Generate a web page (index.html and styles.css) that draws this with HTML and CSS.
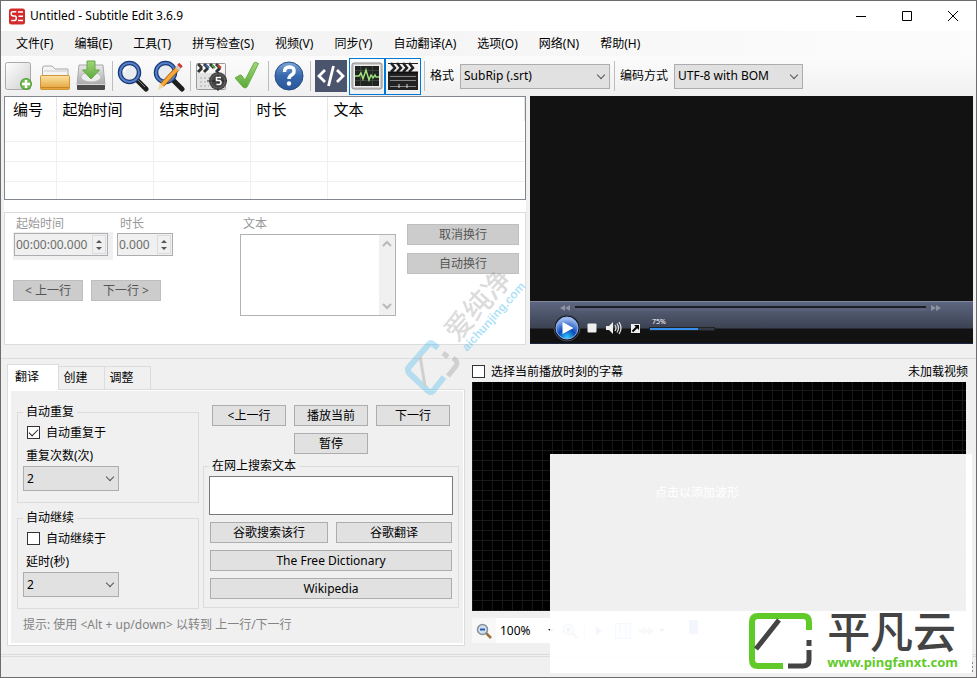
FILE: index.html
```html
<!DOCTYPE html>
<html lang="zh-CN">
<head>
<meta charset="utf-8">
<title>Untitled - Subtitle Edit 3.6.9</title>
<link rel="stylesheet" href="styles.css">
</head>
<body>
<div class="window">
  <header class="titlebar">
    <svg class="app-icon" width="16" height="17" viewBox="0 0 16 17"><rect width="16" height="16" y=".5" rx="2.5" fill="#d32a2c"/><path d="M7.3 3.8H3.8Q2.2 3.8 2.2 5.7T3.8 8h2q1.5 0 1.5 2.300t-1.500 2.300H2.200M14 4H9M14 8.200H9.500M14 12.600H9" fill="none" stroke="#fff" stroke-width="1.500"/></svg>
    <h1>Untitled - Subtitle Edit 3.6.9</h1>
    <div class="window-buttons">
      <button aria-label="最小化"><svg width="12" height="12"><path d="M1 6.500h10" stroke="#000"/></svg></button>
      <button aria-label="最大化"><svg width="12" height="12"><path d="M1.500 1.500h9v9h-9z" stroke="#000" fill="none"/></svg></button>
      <button aria-label="关闭"><svg width="12" height="12"><path d="M1 1l10 10M11 1L1 11" stroke="#000"/></svg></button>
    </div>
  </header>

  <nav class="menu">
    <button>文件(F)</button><button>编辑(E)</button><button>工具(T)</button><button>拼写检查(S)</button><button>视频(V)</button><button>同步(Y)</button><button>自动翻译(A)</button><button>选项(O)</button><button>网络(N)</button><button>帮助(H)</button>
  </nav>

  <div class="toolbar">
    <svg width="0" height="0" class="defs">
      <defs>
        <linearGradient id="page" x2="1" y2="1"><stop stop-color="#fff"/><stop offset="1" stop-color="#cfcfcf"/></linearGradient>
        <linearGradient id="green" x2="0" y2="1"><stop stop-color="#a3d77c"/><stop offset="1" stop-color="#5aa83a"/></linearGradient>
        <linearGradient id="folder" x2="0" y2="1"><stop stop-color="#fbe3a4"/><stop offset="1" stop-color="#e3a032"/></linearGradient>
        <linearGradient id="help" x2="0" y2="1"><stop stop-color="#7da7d8"/><stop offset=".5" stop-color="#3768ad"/><stop offset="1" stop-color="#2b5799"/></linearGradient>
        <linearGradient id="metal" x2="0" y2="1"><stop stop-color="#e9e9e9"/><stop offset="1" stop-color="#a8a8a8"/></linearGradient>
        <radialGradient id="play" cy=".95" r=".9"><stop stop-color="#35d0ff"/><stop offset=".45" stop-color="#0a49ba"/><stop offset="1" stop-color="#a9c4f5"/></radialGradient>
      </defs>
    </svg>
    <button aria-label="新建"><svg width="32" height="32"><rect x="2.500" y="2.500" width="25" height="27" rx="2" fill="url(#page)" stroke="#aaa"/><circle cx="23" cy="24" r="6" fill="#4d9d35"/><circle cx="23" cy="24" r="5" fill="#76bb57"/><path d="M23 20v8M19 24h8" stroke="#fff" stroke-width="2.500"/></svg></button>
    <button aria-label="打开"><svg width="32" height="32"><path d="M3.500 28V8q0-2 2-2H13l3 3h13v19z" fill="#f4f4f4" stroke="#a9a9a9"/><path d="M5 11h24" stroke="#ccc"/><rect x="1.500" y="15.500" width="29" height="14" rx="1" fill="url(#folder)" stroke="#d2943a"/><path d="M2 27.500h28" stroke="#c9852a"/></svg></button>
    <button aria-label="保存"><svg width="32" height="32"><path d="M4 5h24l2 20H2z" fill="url(#metal)" stroke="#aaa"/><ellipse cx="16" cy="17" rx="10" ry="5" fill="#ededed" stroke="#bbb"/><rect x="2" y="24" width="28" height="6" rx="1" fill="#4b4b4b"/><path d="M2 24.500h28" stroke="#d7d7d7"/><path d="M12 1h8v9h4.500L16 19 7.500 10H12z" fill="url(#green)" stroke="#65a844"/></svg></button>
    <i class="sep"></i>
    <button aria-label="查找"><svg width="32" height="32"><path d="M21 21l8 8" stroke="#1e1e1e" stroke-width="5" stroke-linecap="round"/><path d="M21 20l7 7" stroke="#888" stroke-width="1"/><circle cx="12.500" cy="12.500" r="9.500" fill="#e9edf0" stroke="#1b3a78" stroke-width="4.500"/><circle cx="12.500" cy="12.500" r="9.500" fill="none" stroke="#5582c8" stroke-width="2"/><path d="M7 12q1-5 6-5" stroke="#fff" stroke-width="2" fill="none"/></svg></button>
    <button aria-label="替换"><svg width="32" height="32"><path d="M21 21l8 8" stroke="#1e1e1e" stroke-width="5" stroke-linecap="round"/><circle cx="12.500" cy="12.500" r="9.500" fill="#e9edf0" stroke="#1b3a78" stroke-width="4.500"/><circle cx="12.500" cy="12.500" r="9.500" fill="none" stroke="#5582c8" stroke-width="2"/><path d="M25 8L9 25" stroke="#9c560d" stroke-width="5"/><path d="M25 8L9 25" stroke="#f6a938" stroke-width="3.500"/><path d="M7 23l4 4-6 3z" fill="#f0d6a0"/><path d="M24 9l3-3" stroke="#ccc" stroke-width="5"/><path d="M26 6.500l2-2" stroke="#d7352d" stroke-width="5"/></svg></button>
    <i class="sep"></i>
    <button aria-label="同步"><svg width="32" height="32"><rect x="1.500" y="3.500" width="29" height="26" rx="1" fill="#e3e3e3" stroke="#999"/><path d="M2 4h28v9H2z" fill="#f7f7f7"/><path d="M3 4l4 4M9 4l4 4M15 4l4 4M21 4l4 4" stroke="#3b3b3b" stroke-width="3"/><path d="M3 12l4-4M9 12l4-4M21 12l4-4" stroke="#333" stroke-width="3"/><path d="M11 5l3 3" stroke="#3b6bb0" stroke-width="2"/><path d="M17 5l3 3" stroke="#4ca03f" stroke-width="2"/><path d="M23 5l3 3" stroke="#cd4633" stroke-width="2"/><path d="M5 18h10M5 22h8M5 26h9" stroke="#aaa" stroke-dasharray="2 2"/><circle cx="23" cy="21" r="9" fill="#444"/><path d="M12 21h20M23 12v19" stroke="#222"/><circle cx="23" cy="21" r="7" fill="none" stroke="#666"/><path d="M26 17.500h-4.500v3h2.500q2 0 2 2t-2 2h-2.500" fill="none" stroke="#fff" stroke-width="1.500"/></svg></button>
    <button aria-label="拼写检查"><svg width="32" height="32"><path d="M4 18l5-3q1-.5 2 1l3 4L23 3q.5-1 1.500-.7l3 1.200Q22 15 16 27q-2 2-4 0z" fill="url(#green)" stroke="#69b042"/></svg></button>
    <i class="sep"></i>
    <button aria-label="帮助"><svg width="32" height="32"><circle cx="16" cy="16" r="14" fill="url(#help)" stroke="#274d86"/><path d="M11.500 12q0-5 5-5t4.500 4.500q0 2-2.500 3.500T16 19" fill="none" stroke="#fff" stroke-width="3.500"/><circle cx="16" cy="23.500" r="2.200" fill="#fff"/></svg></button>
    <i class="sep"></i>
    <button aria-label="源视图"><svg width="32" height="32"><path d="M0 0h32v32H0z" fill="#4a546c"/><path d="M10 10l-6 6 6 6M22 10l6 6-6 6M18.500 6l-5 20" fill="none" stroke="#fff" stroke-width="2.800"/></svg></button>
    <button class="on" aria-label="波形"><svg width="32" height="32"><rect x="1" y="3" width="30" height="26" rx="2" fill="#cfcfcf" stroke="#888"/><rect x="3.500" y="5.500" width="25" height="21" fill="#202522" stroke="#eee"/><path d="M4 10.500h24M4 20.500h24M9.500 6v20M21.500 6v20" stroke="#3c443e"/><path d="M4 16h4l2-3 2 6 3-9 3 10 2-5 2 3 2-3 1 2h3" fill="none" stroke="#9fe07c" stroke-width="1.500"/></svg></button>
    <button class="on" aria-label="视频"><svg width="32" height="32"><path d="M1 3h30v27H1z" fill="#222"/><path d="M1 4h30v8H1z" fill="#f3f3f3"/><path d="M4 3l4 5-4 4M10 3l4 5-4 4M16 3l4 5-4 4M22 3l4 5-4 4" fill="none" stroke="#222" stroke-width="2.500"/><path d="M1 12.500h30" stroke="#111" stroke-width="2"/><path d="M3 16.500h26M3 20.500h26M3 26.500h26" stroke="#888"/><path d="M12 24v4M20 24v4" stroke="#ddd"/></svg></button>
    <i class="sep"></i>
    <label for="format">格式</label>
    <span class="combo format"><select id="format"><option>SubRip (.srt)</option></select></span>
    <i class="sep slim"></i>
    <label for="encoding">编码方式</label>
    <span class="combo encoding"><select id="encoding"><option>UTF-8 with BOM</option></select></span>
  </div>

  <main class="upper">
    <section class="editor">
      <div class="list">
        <table>
          <colgroup><col class="c-num"><col class="c-time"><col class="c-time"><col class="c-dur"><col></colgroup>
          <thead><tr><th>编号</th><th>起始时间</th><th>结束时间</th><th>时长</th><th>文本</th></tr></thead>
          <tbody>
            <tr><td></td><td></td><td></td><td></td><td></td></tr>
            <tr><td></td><td></td><td></td><td></td><td></td></tr>
            <tr><td></td><td></td><td></td><td></td><td></td></tr>
            <tr><td></td><td></td><td></td><td></td><td></td></tr>
          </tbody>
        </table>
      </div>
      <div class="detail">
        <div class="times">
          <div class="time-row">
            <div><label for="start">起始时间</label><span class="spin-back"><span class="spin start"><input id="start" value="00:00:00.000" disabled><i class="arrows"></i></span></span></div>
            <div><label for="dur">时长</label><span class="spin dur"><input id="dur" value="0.000" disabled><i class="arrows"></i></span></div>
          </div>
          <div class="nav-row"><button class="btn" disabled>&lt; 上一行</button><button class="btn" disabled>下一行 &gt;</button></div>
        </div>
        <div class="text-col">
          <label for="text">文本</label>
          <div class="textbox"><textarea id="text" disabled></textarea>
            <div class="scroll"><svg width="10" height="8"><path d="M1 6l4-4 4 4" fill="none" stroke="#b9b9b9" stroke-width="2"/></svg><svg width="10" height="8"><path d="M1 2l4 4 4-4" fill="none" stroke="#b9b9b9" stroke-width="2"/></svg></div>
          </div>
        </div>
        <div class="wrap-col"><button class="btn" disabled>取消换行</button><button class="btn" disabled>自动换行</button></div>
      </div>
    </section>

    <section class="video">
      <div class="player">
        <div class="seek">
          <svg width="10" height="6"><path d="M5 0v6L0 3zM10 0v6L5 3z" fill="#8c92a0"/></svg>
          <i class="track"></i>
          <svg width="10" height="6"><path d="M0 0v6l5-3zM5 0v6l5-3z" fill="#8c92a0"/></svg>
        </div>
        <div class="controls">
          <button aria-label="播放"><svg width="28" height="28"><circle cx="14" cy="14" r="13" fill="#12141d" stroke="#444b5b"/><circle cx="14" cy="14" r="11" fill="url(#play)" stroke="#8bb2ee"/><path d="M9.500 8v12l11-6z" fill="#fff"/></svg></button>
          <button aria-label="停止"><svg width="10" height="10"><rect x=".5" y=".5" width="9" height="9" rx="1" fill="#eee"/></svg></button>
          <button aria-label="静音"><svg width="16" height="14"><path d="M0 5h3l4-4v12L3 9H0z" fill="#eee"/><path d="M9 4q2 3 0 6M11 2.500q3 4.500 0 9M13 1q4 6 0 12" fill="none" stroke="#ddd" stroke-width="1.300"/></svg></button>
          <button aria-label="全屏"><svg width="9" height="9"><path d="M0 0h9v9H0z" fill="#eee"/><path d="M1.500 7.500L6 3" stroke="#000" stroke-width="2"/><path d="M3 1h5v5z" fill="#000"/></svg></button>
          <div class="volume"><span>75%</span><i class="level"></i></div>
        </div>
      </div>
    </section>
  </main>

  <section class="lower">
    <div class="tabs">
      <div class="tab-row"><button class="active">翻译</button><button>创建</button><button>调整</button></div>
      <div class="tab-panel">
        <div class="tab-body">
          <div class="auto-col">
            <fieldset>
              <legend>自动重复</legend>
              <label class="check"><input type="checkbox" checked>自动重复于</label>
              <label class="line" for="repeat">重复次数(次)</label>
              <span class="combo short"><select id="repeat"><option>2</option></select></span>
            </fieldset>
            <fieldset>
              <legend>自动继续</legend>
              <label class="check"><input type="checkbox">自动继续于</label>
              <label class="line" for="delay">延时(秒)</label>
              <span class="combo short"><select id="delay"><option>2</option></select></span>
            </fieldset>
          </div>
          <div class="play-col">
            <div class="play-grid"><button class="btn">&lt;上一行</button><button class="btn">播放当前</button><button class="btn">下一行</button><button class="btn pause">暂停</button></div>
            <fieldset class="search">
              <legend>在网上搜索文本</legend>
              <textarea aria-label="在网上搜索文本"></textarea>
              <div class="search-grid"><button class="btn">谷歌搜索该行</button><button class="btn">谷歌翻译</button><button class="btn wide">The Free Dictionary</button><button class="btn wide">Wikipedia</button></div>
            </fieldset>
          </div>
        </div>
        <p class="hint">提示: 使用 &lt;Alt + up/down&gt; 以转到 上一行/下一行</p>
      </div>
    </div>

    <div class="wave-col">
      <div class="wave-head"><label class="check"><input type="checkbox">选择当前播放时刻的字幕</label><span>未加载视频</span></div>
      <div class="waveform"><span>点击以添加波形</span></div>
      <div class="wave-tools">
        <button aria-label="缩小"><svg width="16" height="16"><path d="M10 10l5 5" stroke="#a0703a" stroke-width="2.500"/><circle cx="6.500" cy="6.500" r="5" fill="#cfe0f3" stroke="#8b9097" stroke-width="1.500"/><path d="M4 6.500h5" stroke="#2a5caa" stroke-width="2"/></svg></button>
        <span class="zoom"><select aria-label="缩放"><option>100%</option></select><i></i></span>
        <button aria-label="放大"><svg width="16" height="16"><path d="M10 10l5 5" stroke="#a0703a" stroke-width="2.500"/><circle cx="6.500" cy="6.500" r="5" fill="#cfe0f3" stroke="#70757c" stroke-width="1.500"/><path d="M4 6.500h5M6.500 4v5" stroke="#2a5caa" stroke-width="2"/></svg></button>
        <i class="tool-sep"></i>
        <button aria-label="播放选区"><svg width="16" height="16"><path d="M5 3v10l6-5z" fill="#3c7fd0"/></svg></button>
        <button aria-label="居中"><svg width="16" height="16"><path d="M.5.500h15v15H.500zM5 1v14M11 1v14" fill="#cfe0f3" stroke="#5b8fd0"/></svg></button>
        <button aria-label="播放速度"><svg width="16" height="16"><path d="M0 6h4V3l5 5-5 5v-3H0zM8 6h1V3l6 5-6 5v-3z" fill="#9ba78d"/></svg></button>
        <i class="drop"></i>
        <i class="marker"></i>
      </div>
    </div>
  </section>
  <footer class="status"><svg width="12" height="12"><path d="M10 1h2M10 5h2M10 9h2M6 9h2M6 5h2M2 9h2" stroke="#888" stroke-width="2"/></svg></footer>

  <div class="mark" aria-hidden="true">
    <svg width="140" height="140" viewBox="0 0 140 140">
      <g opacity=".3" fill="none" stroke-width="6">
        <path d="M36 88l-5-4q-2-2-4 0L7 107q-2 3 0 6l19 18q3 2 5 0l11-14" stroke="#2eb4ee"/>
        <path d="M18 96l5 30" stroke="#888" stroke-width="3"/>
        <path d="M41 93l5 4M51 98q6 4 3 8l-8 10" stroke="#888" stroke-width="5"/>
      </g>
      <text class="mark-cn" transform="translate(55 83) rotate(-48)">爱纯净</text>
      <text class="mark-url" transform="translate(65 92) rotate(-48)">aichunjing.com</text>
    </svg>
  </div>

  <aside class="veil">
    <div class="brand">
      <svg width="66" height="58" viewBox="0 0 66 58">
        <path d="M35 53H10q-6 0-6-6V9q0-6 6-6h45q6 0 6 6v8" fill="none" stroke="#5fca28" stroke-width="6"/>
        <path d="M8 36L31 7M40 53h15q6 0 6-6V37M61 27v6" fill="none" stroke="#444" stroke-width="5"/>
      </svg>
      <div><strong>平凡云</strong><span>www.pingfanxt.com</span></div>
    </div>
  </aside>
</div>
</body>
</html>
```
FILE: styles.css
```css
* { box-sizing: border-box; }

body {
  margin: 0;
  font: 12px/16px "Noto Sans", "Noto Sans CJK SC", sans-serif;
  color: #000;
  background: #f0f0f0;
}

button, input, select, textarea { font: inherit; color: inherit; margin: 0; }
button { border: 0; padding: 0; background: none; white-space: nowrap; }
svg { display: block; }
label { white-space: nowrap; }

.window {
  position: relative;
  display: flex;
  flex-direction: column;
  min-height: 100vh;
  border: 1px solid #6e6c6e;
}

/* Title bar and menu */
.titlebar { display: flex; align-items: center; height: 30px; padding-left: 8px; background: #fff; }
.titlebar h1 { flex: 1; margin: 0 0 0 5px; font-size: 12px; font-weight: 400; }
.window-buttons { display: flex; }
.window-buttons button { display: grid; place-items: center; width: 46px; height: 30px; }
.menu { display: flex; gap: 1px; height: 25px; padding-left: 5px; background: linear-gradient(90deg, #f0f0f0, #fcfcfc); }
.menu button { padding: 0 10px; }

/* Toolbar */
.toolbar { display: flex; align-items: center; height: 40px; background: linear-gradient(#fcfcfc, #f0f0f0); }
.toolbar button { display: grid; flex: none; place-items: center; width: 36px; height: 37px; }
.toolbar .on { border: 1px solid #0078d7; }
.defs { position: absolute; }
.sep { width: 6px; height: 30px; border-left: 1px solid #bdbdbd; margin-left: 3px; margin-right: -3px; }
.toolbar label { margin: 0 6px; }
.sep + label { margin-left: 3px; }
.slim { margin-left: 4px; margin-right: -1px; }
.slim + label { margin-left: 1px; }

.combo { position: relative; display: block; height: 25px; }
.combo select {
  width: 100%;
  height: 100%;
  padding: 0 3px;
  border: 1px solid #adadad;
  border-radius: 0;
  background: #e1e1e1;
  appearance: none;
}
.combo::after {
  content: "";
  position: absolute;
  top: 8px;
  right: 6px;
  width: 5px;
  height: 5px;
  border: solid #555;
  border-width: 0 1px 1px 0;
  transform: rotate(45deg);
}
.format { width: 150px; }
.encoding { width: 129px; }
.short { width: 96px; }

.btn { height: 21px; border: 1px solid #adadad; background: #e1e1e1; line-height: 19px; }
.btn:disabled { border-color: #bfbfbf; background: #ccc; color: #555; }

/* Subtitle list and line editor */
.upper { display: grid; grid-template-columns: minmax(522px, 54fr) minmax(300px, 46fr); gap: 4px; padding: 0 3px; }
.editor { background: #fff; }
.list { height: 104px; overflow: hidden; border: 1px solid #828790; }
table { width: 100%; table-layout: fixed; border-collapse: collapse; }
.c-num { width: 51px; }
.c-time { width: 97px; }
.c-dur { width: 77px; }
th { height: 24px; padding: 0 6px; border-right: 1px solid #e5e5e5; font-size: 15px; font-weight: 400; text-align: left; }
th:first-child { padding-left: 8px; }
td { height: 20px; padding: 0; border-right: 1px solid #f0f0f0; border-bottom: 1px solid #f0f0f0; }
td:last-child { border-right: 0; }

.detail { display: flex; height: 133px; margin-top: 12px; padding: 3px 6px 0 8px; border: 1px solid #dcdcdc; }
.detail label { display: block; padding-left: 3px; color: #999; }
.times { flex: 1; }
.time-row { display: flex; gap: 4px; height: 64px; }
.spin-back { display: block; padding: 1px 5px 4px 1px; background: #f0f0f0; }
.spin { display: flex; height: 23px; border: 1px solid #abadb3; background: #f0f0f0; }
.start { width: 94px; }
.dur { width: 56px; margin-top: 1px; }
.spin input { flex: 1; min-width: 0; padding: 0 1px; border: 0; background: none; color: #6d6d6d; }
.arrows { display: grid; place-content: center; gap: 4px; width: 14px; margin: 1px; border: 1px solid #dcdcdc; }
.arrows::before, .arrows::after { content: ""; border: 3px solid transparent; }
.arrows::before { border-top: 0; border-bottom-color: #555; }
.arrows::after { border-bottom: 0; border-top-color: #555; }
.nav-row { display: flex; gap: 8px; }
.nav-row .btn { width: 70px; }
.text-col { width: 156px; }
.textbox { display: flex; height: 82px; margin-top: 2px; border: 1px solid #b3b3b3; }
.textbox textarea { flex: 1; min-width: 0; border: 0; background: #fff; resize: none; }
.scroll { display: flex; flex-direction: column; justify-content: space-between; align-items: center; width: 16px; padding: 5px 0; background: #f0f0f0; }
.wrap-col { display: flex; flex-direction: column; gap: 8px; width: 112px; margin: 8px 0 0 11px; }

/* Video player */
.video { display: flex; flex-direction: column; justify-content: flex-end; margin-bottom: 1px; background: #121212; }
.player { height: 43px; border-top: 1px solid #81879a; border-bottom: 1px solid #1c2642; background: linear-gradient(#5d6680, #3b4252 26px, #121212 27px); }
.seek { display: flex; align-items: center; gap: 5px; height: 12px; padding: 0 32px 0 30px; }
.track { flex: 1; height: 5px; border-top: 2px solid #1c1e25; background: #59617a; }
.controls { display: flex; align-items: center; height: 28px; padding-left: 23px; }
.controls button + button { margin-left: 6px; }
.controls button:nth-child(3) { margin-left: 9px; }
.controls button:nth-child(4) { margin-left: 9px; }
.volume { width: 67px; margin: -9px 0 0 8px; padding-left: 1px; }
.volume span { display: block; padding-left: 3px; height: 10px; color: #fff; font-size: 7px; line-height: 10px; }
.level { display: block; height: 4px; border: 1px solid #222; background: linear-gradient(90deg, #398fee 75%, #333a48 75%); }

/* Lower area */
.lower { display: grid; grid-template-columns: 458px 1fr; gap: 7px; margin-top: 13px; padding: 2px 10px 8px 6px; border-top: 1px solid #dcdcdc; border-bottom: 1px solid #dcdcdc; }
.tab-row { display: flex; align-items: flex-end; height: 28px; padding-top: 3px; }
.tab-row button { width: 46px; height: 23px; padding-right: 12px; border: 1px solid #dcdcdc; border-width: 1px 1px 0 0; }
.tab-row .active { width: 52px; height: 26px; margin-bottom: -1px; padding-bottom: 2px; border-left-width: 1px; background: #fff; }
.tab-panel { padding: 13px 2px 0 6px; border: 1px solid #dcdcdc; box-shadow: inset 3px 0 #fff, inset 0 1px #fff, inset 0 -2px #fff, inset -1px 0 #fff; }
.tab-body { display: flex; gap: 4px; padding: 1px 3px 0; }
.auto-col { display: flex; flex-direction: column; gap: 7px; width: 182px; }
fieldset { min-width: 0; margin: 0; padding: 0 5px 11px; border: 1px solid #dcdcdc; }
legend { height: 16px; padding: 0 3px; }
.check { display: flex; align-items: center; gap: 6px; }
fieldset .check { height: 25px; padding-left: 4px; }
.check input { display: grid; place-items: center; width: 13px; height: 13px; border: 1px solid #333; background: #fff; appearance: none; }
.check input:checked::after { content: ""; width: 8px; height: 4px; margin-top: -3px; border: solid #222; border-width: 0 0 1px 1px; transform: rotate(-45deg); }
.line { display: block; height: 21px; padding-left: 3px; line-height: 21px; }
.play-col { flex: 1; display: flex; flex-direction: column; padding-top: 1px; }
.play-grid { display: grid; grid-template-columns: repeat(3, 74px); gap: 7px 8px; padding-left: 9px; }
.pause { grid-column: 2; }
.search { margin-top: 4px; padding: 2px 5px 8px; }
.search legend { padding: 0 3px; }
.search textarea { display: block; width: 100%; height: 39px; border: 1px solid #7a7a7a; background: #fff; resize: none; }
.search-grid { display: grid; grid-template-columns: 118px 1fr; gap: 7px 8px; padding: 7px 1px 0; }
.wide { grid-column: 1 / -1; }
.hint { margin: 8px 0 12px 9px; color: #838383; }

.wave-col { display: flex; flex-direction: column; padding-bottom: 3px; }
.wave-head { display: flex; justify-content: space-between; align-items: center; height: 21px; margin-right: -2px; }
.waveform {
  flex: 1;
  display: grid;
  place-items: center;
  padding: 0 44px 8px 0;
  background: repeating-linear-gradient(90deg, #181818 0 1px, transparent 1px 10px), repeating-linear-gradient(transparent 0 8px, #181818 8px 9px, transparent 9px 10px), #000;
  color: #fff;
}
.wave-tools { display: flex; align-items: center; height: 25px; margin-top: 7px; background: #f8f8f8; }
.wave-tools button { display: grid; place-items: center; width: 24px; }
.zoom { display: flex; align-items: center; width: 62px; height: 25px; background: #fff; }
.zoom select { width: 52px; padding: 0 4px; border: 0; background: none; appearance: none; }
.zoom i, .drop { border: 3px solid transparent; border-top-color: #222; border-bottom: 0; }
.tool-sep { width: 1px; height: 18px; margin: 0 2px; background: #bdbdbd; }
.marker { width: 9px; height: 14px; margin: -8px 0 0 24px; background: #3c7fd0; }
.status { flex: 1; display: flex; justify-content: flex-end; align-items: flex-end; min-height: 21px; margin-top: 1px; padding: 0 3px 3px 0; border-top: 1px solid #dcdcdc; }

/* Watermark over the centre of the window */
.mark { position: absolute; top: 259px; left: 401px; pointer-events: none; }
.mark-cn { font-size: 28px; font-weight: 500; fill: #999; fill-opacity: .35; }
.mark-url { font-family: "Liberation Sans", sans-serif; font-size: 12px; font-weight: 700; fill: #2eb4ee; fill-opacity: .4; }

/* Translucent panel over the lower right corner */
.veil {
  position: absolute;
  right: 4px;
  bottom: 4px;
  display: flex;
  justify-content: flex-end;
  align-items: flex-end;
  width: 422px;
  height: 219px;
  background: rgba(255, 255, 255, .94);
}
.brand { display: flex; gap: 13px; padding: 2px 14px 2px 8px; background: #fff; }
.brand strong { display: block; height: 40px; color: #444; font-size: 43px; font-weight: 500; line-height: 38px; }
.brand span { display: block; height: 16px; color: #5fca28; font-size: 13px; font-weight: 700; line-height: 18px; }
```
